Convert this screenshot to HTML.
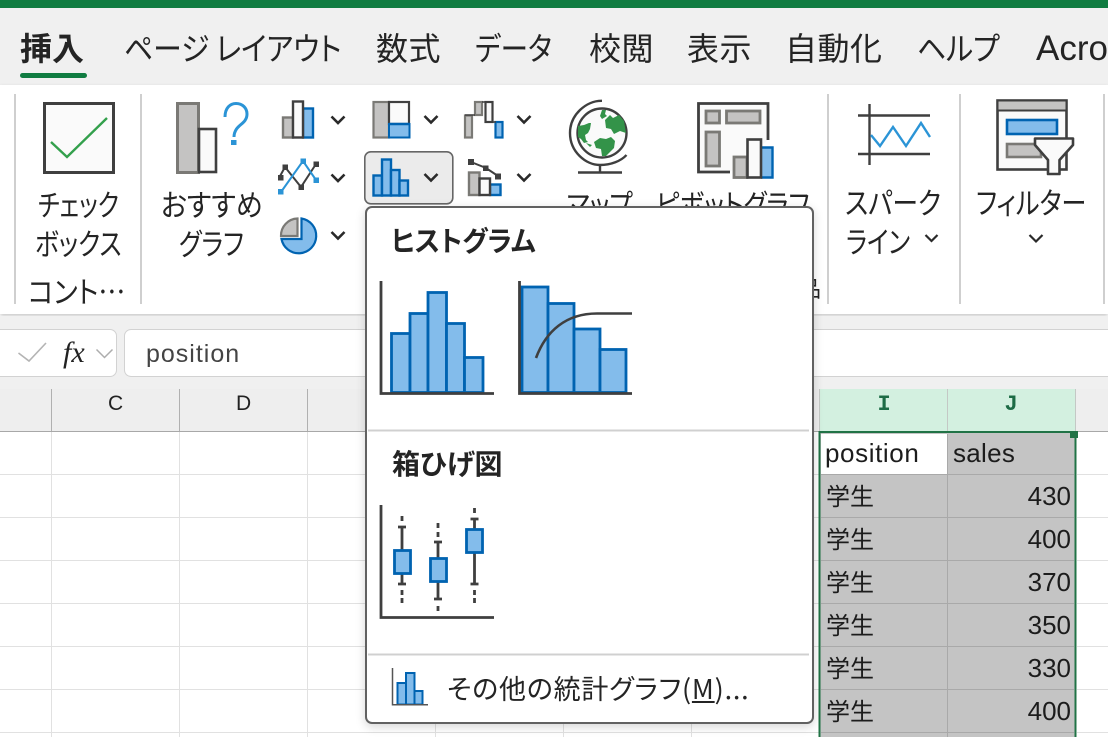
<!DOCTYPE html>
<html lang="ja">
<head>
<meta charset="utf-8">
<title>Excel</title>
<style>
html,body{margin:0;padding:0;width:1108px;height:737px;overflow:hidden;background:#fff}
body{position:relative;font-family:"Liberation Sans","Noto Sans CJK JP",sans-serif;color:#242424}
.a{position:absolute}
.t{position:absolute;white-space:nowrap;line-height:1;font-family:"Noto Sans CJK JP","Liberation Sans",sans-serif;font-feature-settings:"palt";color:#242424;transform-origin:0 50%}
.tab{font-size:32px;top:31px}
.rb{font-size:30px}
.c{font-size:26px;color:#1c1c1c;font-family:"Liberation Sans","Noto Sans CJK JP",sans-serif}
.k{font-size:24px;color:#1c1c1c;left:826px;font-family:"Noto Sans CJK JP",sans-serif}
svg{position:absolute;left:0;top:0;overflow:visible}
</style>
</head>
<body>
<div class="a" style="left:0;top:0;width:1108px;height:8px;background:#107c41"></div>
<div class="a" style="left:0;top:8px;width:1108px;height:77px;background:#f0f0f0"></div>
<div class="a" style="left:0;top:85px;width:1108px;height:229px;background:#fff;box-shadow:0 2px 4px rgba(0,0,0,.22)"></div>
<div class="a" style="left:0;top:316px;width:1108px;height:73px;background:#f0f0f0"></div>
<div class="a" style="left:0;top:389px;width:1108px;height:42px;background:#eeeeee"></div>
<div class="a" style="left:-20px;top:329px;width:135px;height:46px;background:#fff;border:1px solid #d2d2d2;border-radius:7px"></div>
<div class="a" style="left:124px;top:329px;width:1000px;height:46px;background:#fff;border:1px solid #d2d2d2;border-radius:7px"></div>

<svg width="1108" height="737" viewBox="0 0 1108 737" fill="none">
  <!-- tab underline -->
  <rect x="20" y="73" width="67" height="5" rx="2.5" fill="#107c41"/>
  <!-- separators -->
  <g fill="#cfcfcf">
    <rect x="14" y="94" width="2" height="210"/>
    <rect x="140" y="94" width="2" height="210"/>
    <rect x="827" y="94" width="2" height="210"/>
    <rect x="959" y="94" width="2" height="210"/>
    <rect x="1103" y="94" width="2" height="210"/>
  </g>
  <!-- grid -->
  <g stroke="#e1e1e1" stroke-width="1">
    <path d="M0 474.5H819M0 517.5H819M0 560.5H819M0 603.5H819M0 646.5H819M0 689.5H819M0 732.5H819M1077 474.5H1108M1077 517.5H1108M1077 560.5H1108M1077 603.5H1108M1077 646.5H1108M1077 689.5H1108M1077 732.5H1108"/>
    <path d="M51.5 431V737M179.5 431V737M307.5 431V737M435.5 431V737M563.5 431V737M691.5 431V737"/>
  </g>
  <!-- header cells -->
  <path d="M0 431.5H1108" stroke="#a8a8a8"/>
  <path d="M51.5 389V431M179.5 389V431M307.5 389V431" stroke="#b0b0b0"/>
  <rect x="820" y="389" width="256" height="42" fill="#d3f0e0"/>
  <path d="M819.5 389V431M947.5 389V431M1075.5 389V431" stroke="#c4c8c5"/>
  <!-- selection -->
  <rect x="820" y="432" width="255" height="305" fill="#c4c4c4"/>
  <rect x="821" y="434" width="126" height="40" fill="#fff"/>
  <path d="M821 474.5H1074M821 517.5H1074M821 560.5H1074M821 603.5H1074M821 646.5H1074M821 689.5H1074M821 732.5H1074M947.5 434V737" stroke="#a9a9a9"/>
  <path d="M819.5 737V432H1075.5V737" stroke="#217346" stroke-width="2"/>
  <rect x="1070" y="431" width="8" height="7" fill="#217346"/>

  <!-- checkbox icon -->
  <rect x="44.5" y="103.500" width="69" height="69" fill="#fafafa" stroke="#3f3f3f" stroke-width="3"/>
  <path d="M51 142L67 157L107 118" stroke="#33a04c" stroke-width="2.400"/>
  <!-- recommended -->
  <rect x="177.500" y="103.500" width="21" height="69" fill="#c4c3c2" stroke="#7a7975" stroke-width="3"/>
  <rect x="199" y="129" width="17" height="43" fill="#fafafa" stroke="#3f3f3f" stroke-width="2.600"/>
  <path d="M225 117C225 108 230 103.500 236 103.500C242.500 103.500 247 108 247 114C247 122 240 124 236.500 129C234.500 132 234 134 234 137" stroke="#2b94d6" stroke-width="3"/>
  <rect x="231" y="140" width="5.500" height="5" fill="#2b94d6"/>
  <!-- column icon -->
  <rect x="283" y="117.500" width="10" height="20" fill="#c4c3c2" stroke="#7a7975" stroke-width="2.400"/>
  <rect x="303" y="108.500" width="10" height="29" fill="#83bceb" stroke="#0063b1" stroke-width="2.400"/>
  <rect x="293" y="101.500" width="10" height="36" fill="#fafafa" stroke="#3f3f3f" stroke-width="2.400"/>
  <!-- line icon -->
  <path d="M279 178L285 167L301 187L316 164" stroke="#3f3f3f" stroke-width="2"/>
  <path d="M281 192L303 161L316 180" stroke="#2b94d6" stroke-width="2"/>
  <g fill="#3f3f3f"><rect x="278" y="175" width="5.500" height="5.500"/><rect x="282.500" y="164.500" width="5.500" height="5.500"/><rect x="298.500" y="184.500" width="5.500" height="5.500"/><rect x="313.500" y="161.500" width="5.500" height="5.500"/></g>
  <g fill="#2b94d6"><rect x="278" y="189" width="5.500" height="5.500"/><rect x="300.500" y="158.500" width="5.500" height="5.500"/><rect x="313.500" y="177.500" width="5.500" height="5.500"/></g>
  <!-- pie icon -->
  <path d="M301.500 218.500A17.500 17.500 0 1 1 281.500 239H301.500Z" fill="#83bceb" stroke="#0063b1" stroke-width="2.200"/>
  <path d="M297.500 218.500V236H281A17 17 0 0 1 297.500 218.500Z" fill="#c4c3c2" stroke="#7a7975" stroke-width="2.200"/>
  <!-- chevrons -->
  <g stroke="#2a2a2a" stroke-width="2.600">
    <path d="M331.500 116.500L338 123L344.500 116.500"/>
    <path d="M331.500 174.500L338 181L344.500 174.500"/>
    <path d="M331.500 232L338 238.500L344.500 232"/>
    <path d="M424.500 116L431 122.500L437.500 116"/>
    <path d="M517.500 116L524 122.500L530.500 116"/>
    <path d="M517.500 174L524 180.500L530.500 174"/>
    <path d="M925.500 235L931.500 241L937.500 235" stroke-width="2.200"/>
    <path d="M1029.500 235L1036 241.500L1042.500 235" stroke-width="2.200"/>
  </g>
  <!-- treemap -->
  <rect x="373.500" y="102" width="15.500" height="35.500" fill="#c4c3c2" stroke="#7a7975" stroke-width="2.200"/>
  <rect x="389" y="102" width="20" height="22" fill="#fafafa" stroke="#3f3f3f" stroke-width="2.200"/>
  <rect x="389" y="124" width="20.500" height="13.500" fill="#83bceb" stroke="#0063b1" stroke-width="2"/>
  <path d="M389 124H410" stroke="#0063b1" stroke-width="2.400"/>
  <!-- waterfall -->
  <rect x="465" y="115.500" width="7" height="22" fill="#c4c3c2" stroke="#7a7975" stroke-width="2.200"/>
  <rect x="475" y="102" width="7" height="13" fill="#c4c3c2" stroke="#7a7975" stroke-width="2.200"/>
  <rect x="485.500" y="102" width="7" height="20" fill="#fafafa" stroke="#3f3f3f" stroke-width="2.200"/>
  <rect x="495.500" y="122" width="7" height="15.500" fill="#83bceb" stroke="#0063b1" stroke-width="2.200"/>
  <path d="M465 115H475M482 102H486M492 122H496" stroke="#3f3f3f" stroke-width="1.500"/>
  <!-- selected button -->
  <rect x="364.800" y="151.800" width="88" height="52" rx="6" fill="#ebebeb" stroke="#666" stroke-width="1.600"/>
  <g fill="#83bceb" stroke="#0063b1" stroke-width="2.400">
    <rect x="373.500" y="175.500" width="8.500" height="20"/>
    <rect x="382" y="159.500" width="9" height="36"/>
    <rect x="391" y="170" width="8.500" height="25.500"/>
    <rect x="399.500" y="180.500" width="8.500" height="15"/>
  </g>
  <path d="M424.500 174L431 180.500L437.500 174" stroke="#2a2a2a" stroke-width="2.600"/>
  <!-- combo icon -->
  <rect x="469" y="172.500" width="10.500" height="22.500" fill="#c4c3c2" stroke="#7a7975" stroke-width="2.400"/>
  <rect x="490" y="184.500" width="10.500" height="10.500" fill="#83bceb" stroke="#0063b1" stroke-width="2.400"/>
  <rect x="479.500" y="178.500" width="10.500" height="16.500" fill="#fafafa" stroke="#3f3f3f" stroke-width="2.400"/>
  <path d="M471 162L486 168L498 176" stroke="#3f3f3f" stroke-width="2"/>
  <g fill="#3f3f3f"><rect x="468" y="159" width="6" height="6"/><rect x="483" y="165.500" width="5.500" height="5.500"/><rect x="495" y="173.500" width="6" height="6"/></g>
  <!-- globe -->
  <circle cx="602" cy="133" r="24.500" fill="#fafafa" stroke="#3f3f3f" stroke-width="2.400"/>
  <path d="M602 100.800C586 100.500 570 115 570 133C570 152 586 165 600 165C611 165 621 161 626.500 155" stroke="#3f3f3f" stroke-width="2.400"/>
  <path d="M600 165V172.500M578 172.500H622" stroke="#3f3f3f" stroke-width="2.400"/>
  <g fill="#339349">
    <path d="M602 110L606 110L605 114L607 116L602 119L600 116Z"/>
    <path d="M605 120L610 115L613 118L619 115L624 121L626 133L620 131L614 134L611 129L606 128Z"/>
    <path d="M578 126L584 125L589 123L591 123L590 129L588 133L585 135L586 140L588 142L584 143L581 139L578 137Z"/>
    <path d="M594 142L600 138L606 139L611 137L615 141L614 148L610 152L606 156L602 156L601 149L596 148Z"/>
    <path d="M586 143L592 145L590 147Z"/>
  </g>
  <!-- pivot chart -->
  <path d="M730 172H698.500V103.500H768V140" fill="#fafafa" stroke="#3f3f3f" stroke-width="2.800"/>
  <g fill="#c4c3c2" stroke="#7a7975" stroke-width="2.800">
    <rect x="706" y="111" width="13.500" height="12"/>
    <rect x="726.500" y="111" width="33.500" height="12"/>
    <rect x="706" y="132" width="13.500" height="34"/>
    <rect x="734" y="157" width="13" height="20.500"/>
  </g>
  <rect x="761" y="147" width="12" height="31" fill="#83bceb"/>
  <path d="M761 147.500H772.500V177.500H761" stroke="#0063b1" stroke-width="2.400"/>
  <rect x="747.500" y="139.500" width="13.500" height="38" fill="#fafafa" stroke="#3f3f3f" stroke-width="2.600"/>
  <!-- sparkline -->
  <path d="M869.500 104V165M858 115.500H930M858 154H930" stroke="#3f3f3f" stroke-width="2.400"/>
  <path d="M871 135L880 146L893 127L906 146L921 123L930 137" stroke="#2b94d6" stroke-width="2.400"/>
  <!-- filter -->
  <rect x="997.500" y="100.500" width="69" height="69" fill="#fafafa" stroke="#3f3f3f" stroke-width="2.600"/>
  <rect x="998.500" y="101.500" width="67" height="9" fill="#c4c3c2"/>
  <path d="M997 110.500H1067" stroke="#3f3f3f" stroke-width="2"/>
  <rect x="1007" y="120" width="50" height="14" fill="#83bceb" stroke="#0063b1" stroke-width="2.600"/>
  <rect x="1007" y="144" width="34" height="13" fill="#c4c3c2" stroke="#7a7975" stroke-width="2.600"/>
  <path d="M1035 138.500H1073V145L1059.500 160V174H1048V160L1035 145Z" fill="#fafafa" stroke="#3f3f3f" stroke-width="2.600" stroke-linejoin="round"/>
  <!-- formula -->
  <path d="M18.500 353L29 361L46 343" stroke="#b4b4b4" stroke-width="1.600"/>
  <path d="M96.500 349.500L104.500 357.500L112.500 349.500" stroke="#adadad" stroke-width="1.500"/>
</svg>

<!-- tabs -->
<span class="t tab" style="left:20px;font-weight:700">挿入</span>
<span class="t tab" style="left:124px;transform:scaleX(.9)">ページ レイアウト</span>
<span class="t tab" style="left:376px;letter-spacing:.5px">数式</span>
<span class="t tab" style="left:475px;transform:scaleX(.86)">データ</span>
<span class="t tab" style="left:589px;letter-spacing:.5px">校閲</span>
<span class="t tab" style="left:687px;letter-spacing:.5px">表示</span>
<span class="t tab" style="left:785px;letter-spacing:.5px">自動化</span>
<span class="t tab" style="left:917px;transform:scaleX(.9)">ヘルプ</span>
<span class="t tab" style="left:1036px;font-family:'Liberation Sans',sans-serif;font-size:35px;top:31px">Acro</span>

<!-- ribbon labels -->
<span class="t rb" style="left:38px;top:188px;transform:scaleX(.79)">チェック</span>
<span class="t rb" style="left:35px;top:227px;transform:scaleX(.82)">ボックス</span>
<span class="t rb" style="left:28px;top:275px;transform:scaleX(.9)">コント…</span>
<span class="t rb" style="left:161px;top:188px;transform:scaleX(.9)">おすすめ</span>
<span class="t rb" style="left:179px;top:227px;transform:scaleX(.83)">グラフ</span>
<span class="t rb" style="left:567px;top:188px;transform:scaleX(.84)">マップ</span>
<span class="t rb" style="left:656px;top:188px;transform:scaleX(.845)">ピボットグラフ</span>
<span class="t rb" style="left:845px;top:186px;transform:scaleX(.86)">スパーク</span>
<span class="t rb" style="left:846px;top:225px;transform:scaleX(.81)">ライン</span>
<span class="t rb" style="left:976px;top:186px;transform:scaleX(.84)">フィルター</span>
<span class="t" style="left:799px;top:277px;font-size:22px">品</span>

<!-- formula bar -->
<span class="t" style="left:63px;top:336px;font:italic 400 30px 'Liberation Serif',serif;color:#222">fx</span>
<span class="t" style="left:146px;top:340px;font:25px 'Liberation Sans',sans-serif;letter-spacing:1px;color:#444">position</span>

<!-- headers -->
<span class="t" style="left:108px;top:392px;font:21px 'Liberation Sans',sans-serif;color:#222">C</span>
<span class="t" style="left:236px;top:392px;font:21px 'Liberation Sans',sans-serif;color:#222">D</span>
<span class="t" style="left:877.5px;top:392px;font:700 22px 'Liberation Mono',monospace;color:#1c6b45">I</span>
<span class="t" style="left:1004.5px;top:392px;font:700 22px 'Liberation Mono',monospace;color:#1c6b45">J</span>

<!-- cells -->
<span class="t c" style="left:825px;top:440px;letter-spacing:.6px">position</span>
<span class="t c" style="left:953px;top:440px;letter-spacing:.3px">sales</span>
<span class="t k" style="top:483px">学生</span>
<span class="t k" style="top:526px">学生</span>
<span class="t k" style="top:569px">学生</span>
<span class="t k" style="top:612px">学生</span>
<span class="t k" style="top:655px">学生</span>
<span class="t k" style="top:698px">学生</span>
<span class="t c" style="right:37px;top:483px">430</span>
<span class="t c" style="right:37px;top:526px">400</span>
<span class="t c" style="right:37px;top:569px">370</span>
<span class="t c" style="right:37px;top:612px">350</span>
<span class="t c" style="right:37px;top:655px">330</span>
<span class="t c" style="right:37px;top:698px">400</span>

<!-- dropdown menu -->
<div class="a" style="left:365px;top:206px;width:445px;height:514px;background:#fff;border:2px solid #616161;border-radius:7px;box-shadow:0 3px 10px rgba(0,0,0,.16)"></div>
<svg width="1108" height="737" viewBox="0 0 1108 737" fill="none">
  <path d="M368 430.500H809M368 654.500H809" stroke="#d0d0d0" stroke-width="2"/>
  <!-- histogram -->
  <g fill="#83bceb" stroke="#0063b1" stroke-width="2.800">
    <rect x="391.500" y="333.500" width="18.500" height="59"/>
    <rect x="410" y="313.500" width="18" height="79"/>
    <rect x="428" y="292.500" width="18.500" height="100"/>
    <rect x="446.500" y="323.500" width="18" height="69"/>
    <rect x="464.500" y="357.500" width="18.500" height="35"/>
  </g>
  <path d="M381 281V393.500H494" stroke="#3f3f3f" stroke-width="2.800"/>
  <!-- pareto -->
  <g fill="#83bceb" stroke="#0063b1" stroke-width="2.800">
    <rect x="522" y="287" width="26" height="105.500"/>
    <rect x="548" y="303.500" width="26" height="89"/>
    <rect x="574" y="329" width="26" height="63.500"/>
    <rect x="600" y="349.500" width="26" height="43"/>
  </g>
  <path d="M519.500 281V393.500H632" stroke="#3f3f3f" stroke-width="2.800"/>
  <path d="M536 358C546 331 566 313.500 597 313.500H632" stroke="#3f3f3f" stroke-width="2.600"/>
  <!-- box & whisker -->
  <path d="M381 505V617.500H494" stroke="#3f3f3f" stroke-width="2.800"/>
  <g stroke="#3f3f3f" stroke-width="2.800">
    <path d="M402 516V521M402 527V550M402 574V584M398 527H406M398 584H406M402 590V595M402 598V603"/>
    <path d="M438 523V528M438 532V537M438 542V558M438 582V599M434 542H442M434 599H442M438 606V611"/>
    <path d="M474.500 508V513M474.500 519V529M474.500 553V584M470.500 519H478.500M470.500 584H478.500M474.500 590V595M474.500 598V603"/>
  </g>
  <g fill="#83bceb" stroke="#0063b1" stroke-width="2.800">
    <rect x="394.500" y="550.500" width="16" height="23"/>
    <rect x="430.500" y="558.500" width="16" height="23"/>
    <rect x="466.500" y="529.500" width="16" height="23"/>
  </g>
  <!-- small icon -->
  <g fill="#83bceb" stroke="#0063b1" stroke-width="2">
    <rect x="397.500" y="683" width="8.500" height="21.500"/>
    <rect x="406" y="673" width="8.500" height="31.500"/>
    <rect x="414.500" y="691" width="8" height="13.500"/>
  </g>
  <path d="M392.500 668V704.800H428" stroke="#555" stroke-width="1.500"/>
</svg>
<span class="t" style="left:391px;top:226px;font-size:28px;font-weight:700;transform:scaleX(.955)">ヒストグラム</span>
<span class="t" style="left:392px;top:449px;font-size:28px;font-weight:700">箱ひげ図</span>
<span class="t" style="left:447px;top:674px;font-size:27px;letter-spacing:.8px;font-family:'Noto Sans CJK JP',sans-serif">その他の統計グラフ(<span style="text-decoration:underline">M</span>)...</span>
</body>
</html>
